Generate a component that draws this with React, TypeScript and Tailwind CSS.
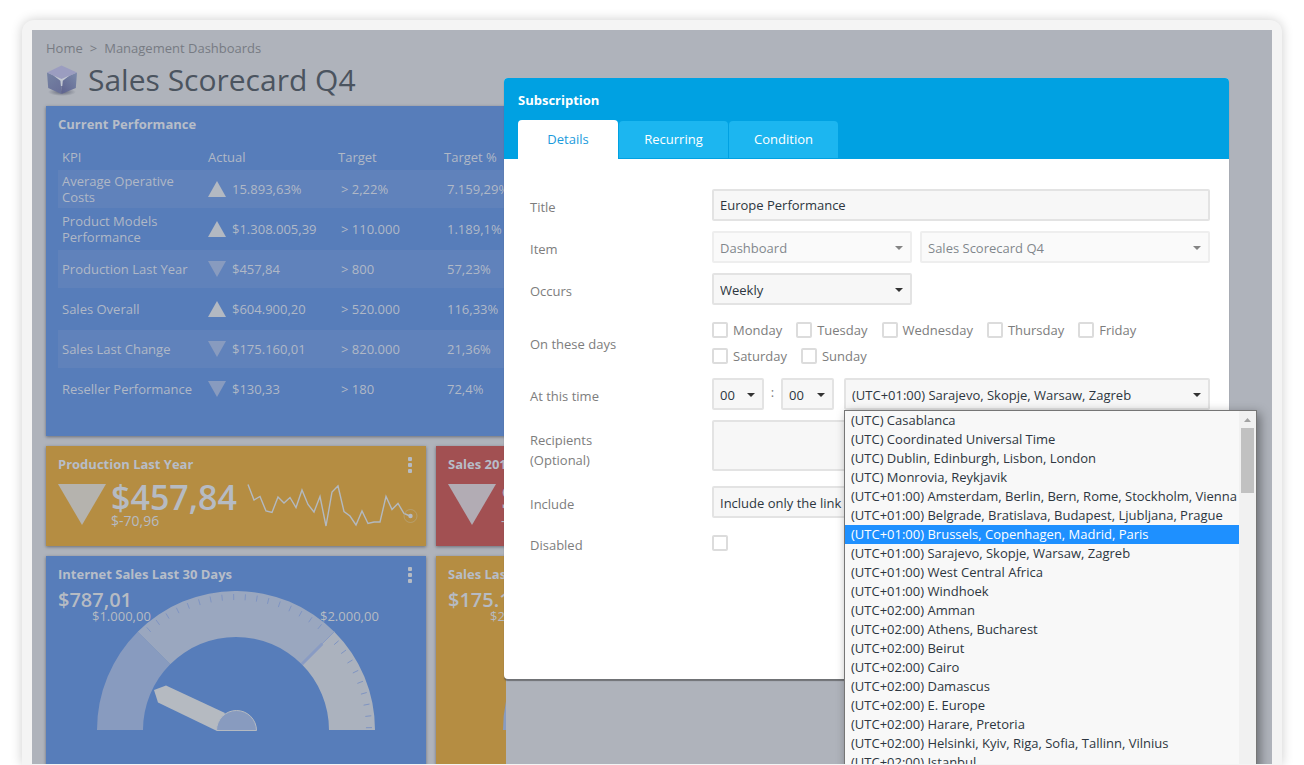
import type { ReactNode, SelectHTMLAttributes } from "react";

type Kpi = { name: string; up: boolean; actual: string; target: string; percent: string };

const kpis: Kpi[] = [
  { name: "Average Operative Costs", up: true, actual: "15.893,63%", target: "> 2,22%", percent: "7.159,29%" },
  { name: "Product Models Performance", up: true, actual: "$1.308.005,39", target: "> 110.000", percent: "1.189,1%" },
  { name: "Production Last Year", up: false, actual: "$457,84", target: "> 800", percent: "57,23%" },
  { name: "Sales Overall", up: true, actual: "$604.900,20", target: "> 520.000", percent: "116,33%" },
  { name: "Sales Last Change", up: false, actual: "$175.160,01", target: "> 820.000", percent: "21,36%" },
  { name: "Reseller Performance", up: false, actual: "$130,33", target: "> 180", percent: "72,4%" },
];

const zones = [
  "(UTC) Casablanca",
  "(UTC) Coordinated Universal Time",
  "(UTC) Dublin, Edinburgh, Lisbon, London",
  "(UTC) Monrovia, Reykjavik",
  "(UTC+01:00) Amsterdam, Berlin, Bern, Rome, Stockholm, Vienna",
  "(UTC+01:00) Belgrade, Bratislava, Budapest, Ljubljana, Prague",
  "(UTC+01:00) Brussels, Copenhagen, Madrid, Paris",
  "(UTC+01:00) Sarajevo, Skopje, Warsaw, Zagreb",
  "(UTC+01:00) West Central Africa",
  "(UTC+01:00) Windhoek",
  "(UTC+02:00) Amman",
  "(UTC+02:00) Athens, Bucharest",
  "(UTC+02:00) Beirut",
  "(UTC+02:00) Cairo",
  "(UTC+02:00) Damascus",
  "(UTC+02:00) E. Europe",
  "(UTC+02:00) Harare, Pretoria",
  "(UTC+02:00) Helsinki, Kyiv, Riga, Sofia, Tallinn, Vilnius",
  "(UTC+02:00) Istanbul",
];
const activeZone = 6;

const days = ["Monday", "Tuesday", "Wednesday", "Thursday", "Friday", "Saturday", "Sunday"];

function CubeIcon() {
  return (
    <svg viewBox="0 0 32 34" className="h-[34px] w-8 shrink-0" aria-hidden="true">
      <defs>
        <radialGradient id="cube-shadow">
          <stop offset="0" stopColor="#5a5f70" stopOpacity="0.9" />
          <stop offset="1" stopColor="#5a5f70" stopOpacity="0" />
        </radialGradient>
        <linearGradient id="cube-left" x1="0" y1="0" x2="0.6" y2="1">
          <stop offset="0" stopColor="#7583a3" />
          <stop offset="1" stopColor="#6a7199" />
        </linearGradient>
        <linearGradient id="cube-right" x1="1" y1="0" x2="0.2" y2="1">
          <stop offset="0" stopColor="#7c8bab" />
          <stop offset="1" stopColor="#606590" />
        </linearGradient>
      </defs>
      <ellipse cx="16" cy="29" rx="14" ry="4" fill="url(#cube-shadow)" />
      <path d="M1 9.500 L15.500 16 V31 L2.200 25 Z" fill="url(#cube-left)" />
      <path d="M31 9.500 L15.500 16 V31 L29.800 25 Z" fill="url(#cube-right)" />
      <path d="M15.500 2.500 L31 9.500 L15.500 16.500 L1 9.500 Z" fill="#9b9dc0" />
      <path d="M7.500 12.500 L15.500 16 L23.500 12.500 L16.800 17.700 L16.300 23 H14.900 L14.400 17.700 Z" fill="#c3c8d2" />
    </svg>
  );
}

function Trend({ up, className, fill }: { up: boolean; className: string; fill: string }) {
  return (
    <svg viewBox="0 0 18 16" preserveAspectRatio="none" className={className} aria-hidden="true">
      <path d={up ? "M9 0 L18 16 H0 Z" : "M0 0 H18 L9 16 Z"} fill={fill} />
    </svg>
  );
}

function MenuButton({ label }: { label: string }) {
  return (
    <button type="button" aria-label={label} className="flex w-2 flex-col items-center gap-[2px]">
      <span className="size-1 rounded-[1px] bg-[#b6bbc3]" />
      <span className="size-1 rounded-[1px] bg-[#b6bbc3]" />
      <span className="size-1 rounded-[1px] bg-[#b6bbc3]" />
    </button>
  );
}

function Card({ title, menu, className, children }: { title: string; menu?: boolean; className: string; children: ReactNode }) {
  return (
    <section className={`px-3 pt-[11px] shadow-[0_1px_3px_rgba(60,65,75,0.6)] ${className}`}>
      <header className="flex h-4 items-center justify-between">
        <h2 className="font-bold whitespace-nowrap text-[#b7bdc8]">{title}</h2>
        {menu && <MenuButton label={`${title} menu`} />}
      </header>
      {children}
    </section>
  );
}

function Sparkline() {
  return (
    <svg viewBox="0 0 172 46" className="h-[46px] w-[172px] shrink-0" aria-hidden="true">
      <polyline
        points="1,0.500 7,16 13,12.500 19,27 25,28.500 31,13 37,19 43,13.500 49,23.500 55,6 61,20.500 67,28 73,12.500 79,42 85,8 91,2 97,27.500 103,32 109,41 115,27 121,39.500 127,38 133,38 139,12.500 145,25.500 151,19.500 157,29.500 163,32"
        fill="none"
        stroke="#b3b9c0"
        strokeWidth="1.400"
      />
      <circle cx="163.500" cy="32" r="6.500" fill="none" stroke="#b8aa88" strokeWidth="1" opacity="0.6" />
      <circle cx="163.500" cy="32" r="2.200" fill="#b6bbc3" />
    </svg>
  );
}

const polar = (radius: number, degrees: number) => {
  const a = (degrees * Math.PI) / 180;
  return `${(139 + radius * Math.cos(a)).toFixed(2)} ${(139 - radius * Math.sin(a)).toFixed(2)}`;
};

const arc = (from: number, to: number) =>
  `M${polar(139, from)} A139 139 0 0 1 ${polar(139, to)} L${polar(93, to)} A93 93 0 0 0 ${polar(93, from)} Z`;

function Gauge() {
  const ticks = Array.from({ length: 27 }, (_, i) => i * 5 + 1).filter((d) => Math.abs(d - 46) > 1);
  return (
    <svg viewBox="0 0 278 140" className="h-[140px] w-[278px] shrink-0" aria-hidden="true">
      <path d={arc(180, 135)} fill="#889bbf" />
      <path d={arc(135, 45)} fill="#9aa7bf" />
      <path d={arc(45, 0)} fill="#abb2be" />
      <path d={`M${polar(93, 45)} L${polar(122, 45)}`} stroke="#899bc3" strokeWidth="3" />
      <path d={`M${polar(122, 45)} L${polar(139, 45)}`} stroke="#899bc3" strokeWidth="1" />
      {ticks.map((d) => (
        <path key={d} d={`M${polar(130, d)} L${polar(136, d)}`} stroke="#7f94c2" strokeWidth="1" />
      ))}
      <path d="M57 99 L69 94.500 L128 122 L119 139.500 L61 111.500 Z" fill="#b5bac1" />
      <path d="M119.500 139.500 A20 20 0 0 1 159.500 139.500 Z" fill="#889bbf" stroke="#b5bac1" strokeWidth="1" />
    </svg>
  );
}

function Select({ className, children, ...rest }: SelectHTMLAttributes<HTMLSelectElement>) {
  return (
    <div className={`relative ${rest.disabled ? "opacity-60" : ""} ${className ?? ""}`}>
      <select
        {...rest}
        className="block h-8 w-full appearance-none rounded-xs border-2 border-[#e3e3e3] bg-[#f7f7f7] pt-[3px] pr-5 pl-1.5 text-[#2d3640] opacity-100"
      >
        {children}
      </select>
      <svg viewBox="0 0 8 4" className="pointer-events-none absolute top-[15px] right-[9px] h-1 w-2" aria-hidden="true">
        <path d="M0 0 H8 L4 4 Z" fill="#333" />
      </svg>
    </div>
  );
}

const checkbox = "size-4 shrink-0 appearance-none rounded-xs border-2 border-[#dcdcdc] bg-white";

function Row({ label, htmlFor, className, children }: { label: ReactNode; htmlFor?: string; className?: string; children: ReactNode }) {
  const text = "w-[182px] shrink-0 pt-1 leading-5";
  return (
    <div className={`flex items-center ${className ?? ""}`}>
      {htmlFor ? (
        <label htmlFor={htmlFor} className={text}>
          {label}
        </label>
      ) : (
        <span className={text}>{label}</span>
      )}
      <div className="min-w-0 flex-1">{children}</div>
    </div>
  );
}

function ZoneList() {
  return (
    <div className="absolute top-full left-0 z-10 flex h-[420px] w-[413px] border border-[#767676] bg-[#f8f8f8] shadow-[3px_3px_10px_rgba(0,0,0,0.4)]">
      <ul role="listbox" aria-label="Time zone" className="min-w-0 flex-1 overflow-hidden">
        {zones.map((zone, i) => (
          <li
            key={zone}
            role="option"
            aria-selected={i === activeZone}
            className={`h-[19px] pl-1.5 leading-[19px] whitespace-nowrap ${i === activeZone ? "bg-[#1e90ff] text-white" : "text-[#2d3640]"}`}
          >
            {zone}
          </li>
        ))}
      </ul>
      <div className="flex w-[17px] flex-col items-center bg-[#f1f1f1]">
        <svg viewBox="0 0 17 17" className="size-[17px]" aria-hidden="true">
          <path d="M5 11 L8.500 7 L12 11 Z" fill="#a3a3a3" />
        </svg>
        <span className="h-[65px] w-[13px] bg-[#c1c1c1]" />
      </div>
    </div>
  );
}

function Dashboard() {
  return (
    <main className="h-full w-[474px] overflow-hidden pl-[14px]">
      <nav aria-label="Breadcrumb" className="flex gap-[7px] pt-[10px] leading-4 text-[#777b83]">
        <a href="#home">Home</a>
        <span>&gt;</span>
        <a href="#dashboards">Management Dashboards</a>
      </nav>
      <div className="flex h-[50px] items-center gap-[10px] pb-[2px]">
        <CubeIcon />
        <h1 className="text-[30px] leading-10 whitespace-nowrap text-[#4b545f]">Sales Scorecard Q4</h1>
      </div>

      <div className="flex w-[770px] flex-col gap-[10px]">
        <Card title="Current Performance" className="h-[330px] bg-[#577dba]">
          <table className="mt-[11px] w-full table-fixed border-separate border-spacing-x-0 border-spacing-y-[2px] text-left leading-4 text-[#b0b8c6]">
            <colgroup>
              <col className="w-[146px]" />
              <col className="w-[130px]" />
              <col className="w-[106px]" />
              <col />
            </colgroup>
            <thead>
              <tr className="h-[22px]">
                <th className="px-1 font-normal">KPI</th>
                <th className="px-1 font-normal">Actual</th>
                <th className="px-1 font-normal">Target</th>
                <th className="px-1 font-normal">Target %</th>
              </tr>
            </thead>
            <tbody>
              {kpis.map((kpi) => (
                <tr key={kpi.name} className="h-[38px] odd:bg-[#6082bb]">
                  <td className="px-1 font-medium">{kpi.name}</td>
                  <td className="px-1 font-medium">
                    <div className="flex items-center gap-1.5">
                      <Trend up={kpi.up} className="h-4 w-[18px] shrink-0" fill={kpi.up ? "#b3b9c2" : "#889bbf"} />
                      {kpi.actual}
                    </div>
                  </td>
                  <td className="px-[7px]">{kpi.target}</td>
                  <td className="px-[7px]">{kpi.percent}</td>
                </tr>
              ))}
            </tbody>
          </table>
        </Card>

        <div className="flex gap-[10px]">
          <Card title="Production Last Year" menu className="h-[100px] w-[380px] bg-[#b58d42]">
            <div className="flex pt-[11px]">
              <Trend up={false} className="h-[41px] w-12 shrink-0" fill="#b5b3ae" />
              <div className="w-[141px] shrink-0 pl-[5px] text-[#b6bbc3]">
                <p className="text-[34px] leading-[26px] font-semibold">$457,84</p>
                <p className="text-sm leading-[22px]">$-70,96</p>
              </div>
              <Sparkline />
            </div>
          </Card>
          <Card title="Sales 201" className="h-[100px] w-[380px] bg-[#a25052]">
            <div className="flex pt-[11px]">
              <Trend up={false} className="h-[41px] w-12 shrink-0" fill="#b2acb4" />
              <div className="pl-[5px] text-[#b6bbc3]">
                <p className="text-[34px] leading-[26px] font-semibold">$</p>
                <p className="text-sm leading-[22px]">-</p>
              </div>
            </div>
          </Card>
        </div>

        <div className="flex gap-[10px]">
          <Card title="Internet Sales Last 30 Days" menu className="h-[240px] w-[380px] bg-[#577dba]">
            <div className="relative pt-2 pl-[39px]">
              <Gauge />
              <p className="absolute top-[7px] left-0 text-xl leading-5 font-semibold text-[#b6bbc3]">$787,01</p>
              <p className="absolute top-[25px] left-[34px] leading-4 text-[#b6bbc3]">$1.000,00</p>
              <p className="absolute top-[25px] left-[262px] leading-4 text-[#b6bbc3]">$2.000,00</p>
            </div>
          </Card>
          <Card title="Sales Last Change" className="h-[240px] w-[380px] bg-[#b58d42]">
            <div className="relative pt-2 pl-[55px]">
              <Gauge />
              <p className="absolute top-[7px] left-0 text-xl leading-5 font-semibold text-[#b6bbc3]">$175.160,01</p>
              <p className="absolute top-[25px] left-[42px] leading-4 text-[#b6bbc3]">$2</p>
            </div>
          </Card>
        </div>
      </div>
    </main>
  );
}

function SubscriptionDialog() {
  const tab = "rounded-t-[4px] text-center";
  return (
    <div
      role="dialog"
      aria-labelledby="dialog-title"
      className="absolute top-12 right-[43px] left-[472px] rounded-[4px] bg-white shadow-[0_2px_1px_rgba(70,70,70,0.6)]"
    >
      <header className="h-[81px] rounded-t-[4px] bg-[#00a1e2] px-[14px] pt-3">
        <h2 id="dialog-title" className="h-[30px] leading-5 font-bold text-white">
          Subscription
        </h2>
        <div role="tablist" className="flex items-start gap-px text-white">
          <button type="button" role="tab" aria-selected="true" className={`h-[39px] w-[100px] bg-white text-[#1a9bdc] ${tab}`}>
            Details
          </button>
          <button type="button" role="tab" aria-selected="false" className={`mt-px h-[37px] w-[109px] bg-[#1cb6f0] ${tab}`}>
            Recurring
          </button>
          <button type="button" role="tab" aria-selected="false" className={`mt-px h-[37px] w-[109px] bg-[#1cb6f0] ${tab}`}>
            Condition
          </button>
        </div>
      </header>

      <form className="flex h-[520px] flex-col gap-[10px] pt-[30px] pr-[19px] pl-[26px] text-[#7d7d7d]">
        <Row label="Title" htmlFor="title">
          <input
            id="title"
            defaultValue="Europe Performance"
            className="block h-8 w-full rounded-xs border-2 border-[#e3e3e3] bg-[#f7f7f7] px-1.5 text-[#2d3640]"
          />
        </Row>
        <Row label="Item" htmlFor="item">
          <div className="flex gap-2">
            <Select id="item" disabled className="w-[200px]">
              <option>Dashboard</option>
            </Select>
            <Select aria-label="Item name" disabled className="flex-1">
              <option>Sales Scorecard Q4</option>
            </Select>
          </div>
        </Row>
        <Row label="Occurs" htmlFor="occurs">
          <Select id="occurs" className="w-[200px]">
            <option>Weekly</option>
          </Select>
        </Row>
        <Row label="On these days" className="h-[53px]">
          <div className="flex flex-wrap gap-x-[14px] gap-y-[10px] pt-[3px]">
            {days.map((day) => (
              <label key={day} className="flex h-4 items-center gap-[5px] leading-4">
                <input type="checkbox" className={checkbox} />
                {day}
              </label>
            ))}
          </div>
        </Row>
        <Row label="At this time" htmlFor="hour">
          <div className="flex">
            <Select id="hour" className="w-[52px]">
              <option>00</option>
            </Select>
            <span className="w-[17px] pt-1 text-center leading-5">:</span>
            <Select aria-label="Minute" className="w-[53px]">
              <option>00</option>
            </Select>
            <div className="relative ml-[10px] flex-1">
              <Select aria-label="Time zone" defaultValue={zones[7]}>
                <option>{zones[7]}</option>
              </Select>
              <ZoneList />
            </div>
          </div>
        </Row>
        <Row
          htmlFor="recipients"
          className="h-[56px] items-start"
          label={
            <span className="block pt-1.5">
              Recipients
              <br />
              (Optional)
            </span>
          }
        >
          <textarea
            id="recipients"
            className="block h-[51px] w-full resize-none rounded-xs border-2 border-[#e3e3e3] bg-[#f7f7f7] px-1.5"
          />
        </Row>
        <Row label="Include" htmlFor="include">
          <Select id="include">
            <option>Include only the link</option>
          </Select>
        </Row>
        <Row label="Disabled" htmlFor="disabled" className="h-[30px]">
          <input id="disabled" type="checkbox" className={`block ${checkbox}`} />
        </Row>
      </form>
    </div>
  );
}

export default function App() {
  return (
    <div className="h-screen overflow-hidden bg-white px-[22px] pt-5 font-['Open_Sans',sans-serif] text-[13px]">
      <div className="h-full rounded-t-xl bg-[#f4f4f4] px-[10px] pt-[10px] pb-px shadow-[0_0_12px_rgba(0,0,0,0.2)]">
        <div className="relative h-full overflow-hidden bg-[#afb3bb]">
          <Dashboard />
          <SubscriptionDialog />
        </div>
      </div>
    </div>
  );
}
